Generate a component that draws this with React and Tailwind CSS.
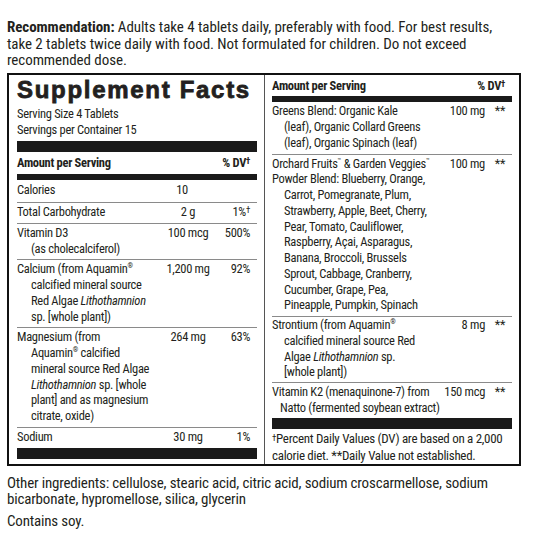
import React from 'react';

const Sup = ({ children }) => (
  <span className="relative -top-[5px] text-[7px] leading-none">{children}</span>
);

const Dag = () => <span className="relative -top-[3px] text-[9px] leading-none">†</span>;

const leftRows = [
  { name: ['Total Carbohydrate'], amt: '2 g', dv: <>1%<Dag /></> },
  { name: ['Vitamin D3', '(as cholecalciferol)'], amt: '100 mcg', dv: '500%' },
  {
    name: [
      <>Calcium (from Aquamin<Sup>®</Sup></>,
      'calcified mineral source',
      <>Red Algae <i>Lithothamnion</i></>,
      'sp. [whole plant])',
    ],
    amt: '1,200 mg',
    dv: '92%',
  },
  {
    name: [
      'Magnesium (from',
      <>Aquamin<Sup>®</Sup> calcified</>,
      'mineral source Red Algae',
      <><i>Lithothamnion</i> sp. [whole</>,
      'plant] and as magnesium',
      'citrate, oxide)',
    ],
    amt: '264 mg',
    dv: '63%',
  },
  { name: ['Sodium'], amt: '30 mg', dv: '1%' },
];

const rightRows = [
  {
    name: ['Greens Blend: Organic Kale', '(leaf), Organic Collard Greens', '(leaf), Organic Spinach (leaf)'],
    amt: '100 mg',
    from: 1,
    pad: 'pt-[1px] pb-[3px]',
  },
  {
    name: [
      <>Orchard Fruits<Sup>™</Sup> &amp; Garden Veggies<Sup>™</Sup></>,
      'Powder Blend: Blueberry, Orange,',
      'Carrot, Pomegranate, Plum,',
      'Strawberry, Apple, Beet, Cherry,',
      'Pear, Tomato, Cauliflower,',
      'Raspberry, Açai, Asparagus,',
      'Banana, Broccoli, Brussels',
      'Sprout, Cabbage, Cranberry,',
      'Cucumber, Grape, Pea,',
      'Pineapple, Pumpkin, Spinach',
    ],
    amt: '100 mg',
    from: 2,
    pad: 'pt-[1px] pb-[3px] border-t border-[#8a8a8a]',
  },
  {
    name: [
      <>Strontium (from Aquamin<Sup>®</Sup></>,
      'calcified mineral source Red',
      <>Algae <i>Lithothamnion</i> sp.</>,
      '[whole plant])',
    ],
    amt: '8 mg',
    from: 1,
    pad: 'pt-0 pb-[2px] border-t border-[#8a8a8a]',
  },
  {
    name: ['Vitamin K2 (menaquinone-7) from', 'Natto (fermented soybean extract)'],
    amt: '150 mcg',
    from: 1,
    small: true,
    pad: 'pt-[1px] pb-[2px] border-t border-[#8a8a8a]',
  },
];

function LeftRow({ row, first }) {
  return (
    <div className={`flex pr-[7px] ${first ? 'pt-[2px] pb-[4px]' : 'pt-[1px] pb-[3px] border-t border-[#8a8a8a]'}`}>
      <div className="flex-1 min-w-0">
        {row.name.map((l, i) => (
          <div key={i} className={`whitespace-nowrap ${i > 0 ? 'pl-[14px]' : ''}`}>{l}</div>
        ))}
      </div>
      <div className={`w-[52px] text-center whitespace-nowrap ${first ? 'pr-[12px]' : ''}`}>{row.amt}</div>
      <div className="w-[36px] text-right whitespace-nowrap">{row.dv}</div>
    </div>
  );
}

function RightRow({ row }) {
  return (
    <div className={`flex pr-[7px] ${row.pad}`}>
      <div className="flex-1 min-w-0">
        {row.name.map((l, i) => (
          <div
            key={i}
            className={`whitespace-nowrap ${i >= row.from ? (row.small ? 'pl-[8px]' : 'pl-[12px]') : ''}`}
          >
            {l}
          </div>
        ))}
      </div>
      <div className="w-[50px] text-right whitespace-nowrap">{row.amt}</div>
      <div className="w-[20px] text-right">**</div>
    </div>
  );
}

export default function App() {
  return (
    <div className="w-[540px] h-[540px] bg-white text-[#231f20] pl-[7px] font-['Roboto','Roboto_Condensed',sans-serif] [font-stretch:75%] overflow-hidden">
      <p className="pt-[19px] text-[15px] leading-[16.5px] tracking-[-0.07px]">
        <b>Recommendation:</b> Adults take 4 tablets daily, preferably with food. For best results,
        <br />
        take 2 tablets twice daily with food. Not formulated for children. Do not exceed
        <br />
        recommended dose.
      </p>

      <div className="mt-[4px] w-[514px] border-2 border-[#111] grid grid-cols-2 text-[12.5px] leading-[15.75px] tracking-[-0.3px]">
        {/* left column */}
        <div className="flex flex-col pl-[8px] pr-[7px] pt-[3px] pb-[4px]">
          <h1 className="font-['Liberation_Sans',sans-serif] [font-stretch:100%] font-bold text-[24px] leading-[24px] tracking-[1.7px] [-webkit-text-stroke:0.8px_#231f20] whitespace-nowrap">
            Supplement Facts
          </h1>
          <div className="mt-[4px] leading-[16px]">Serving Size 4 Tablets</div>
          <div className="leading-[16px]">Servings per Container 15</div>
          <div className="mt-[3px] h-[11px] bg-[#1a1a1a]" />
          <div className="mt-[3px] flex pr-[7px] font-bold">
            <div className="flex-1">Amount per Serving</div>
            <div>% DV<Dag /></div>
          </div>
          <div className="mt-[4px] h-[6px] bg-[#1a1a1a]" />
          <LeftRow first row={{ name: ['Calories'], amt: '10', dv: '' }} />
          {leftRows.map((r, i) => (
            <LeftRow key={i} row={r} />
          ))}
          <div className="h-[11px] bg-[#1a1a1a]" />
        </div>

        {/* right column */}
        <div className="flex flex-col border-l border-[#555] pl-[7px] pr-[7px] pt-[3px]">
          <div className="flex pr-[7px] font-bold">
            <div className="flex-1">Amount per Serving</div>
            <div>% DV<Dag /></div>
          </div>
          <div className="mt-[3px] h-[6px] bg-[#1a1a1a]" />
          {rightRows.map((r, i) => (
            <RightRow key={i} row={r} />
          ))}
          <div className="h-[11px] bg-[#1a1a1a]" />
          <div className="pt-[2px] text-[13px] leading-[16px] tracking-[-0.3px] whitespace-nowrap">
            <span className="relative -top-[2px] text-[9px]">†</span>Percent Daily Values (DV) are based on a 2,000
            <br />
            calorie diet. **Daily Value not established.
          </div>
        </div>
      </div>

      <div className="mt-[9px] text-[15px] leading-[16.5px] tracking-[-0.18px]">
        Other ingredients: cellulose, stearic acid, citric acid, sodium croscarmellose, sodium
        <br />
        bicarbonate, hypromellose, silica, glycerin
      </div>
      <div className="mt-[5px] text-[15px] leading-[16.5px] tracking-[-0.18px]">Contains soy.</div>
    </div>
  );
}
